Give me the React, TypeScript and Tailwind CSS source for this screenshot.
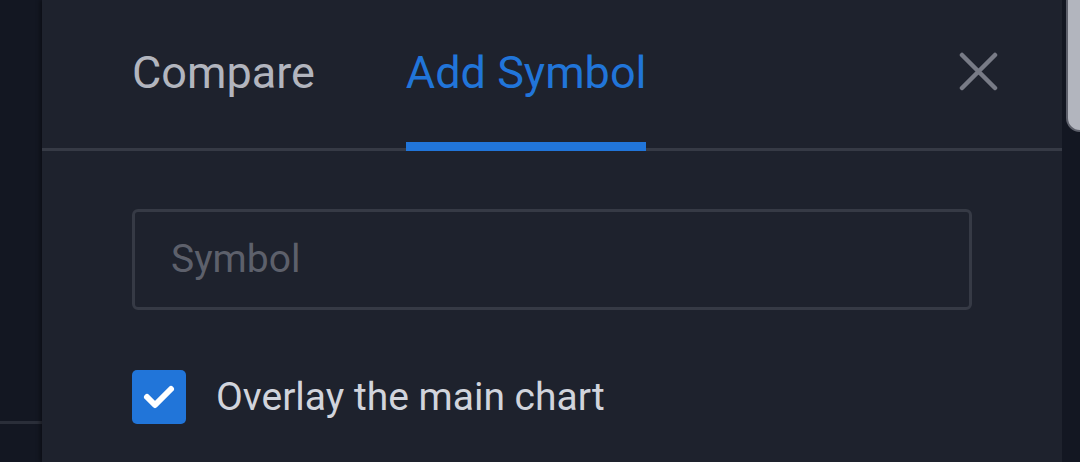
import React from "react";

const App: React.FC = () => {
  return (
    <div className="w-[1080px] h-[462px] overflow-hidden flex bg-[#131722] font-['Roboto',sans-serif]">
      <div className="w-[42px] shrink-0 flex flex-col">
        <div className="h-[421px] bg-[#131722]" />
        <div className="h-[3px] bg-[#2a2e39]" />
        <div className="flex-1 bg-[#131722]" />
      </div>

      <div className="w-[1020px] shrink-0 bg-[#1e222d] shadow-[-2px_0_4px_rgba(0,0,0,0.4)] flex flex-col">
        <div className="h-[151px] shrink-0 flex items-stretch border-b-[3px] border-[#363a45] pl-[90px] pr-[64px]">
          <button className="text-[45px] text-[#b2b5be] mr-[91px] pb-[4px] leading-none">
            Compare
          </button>
          <button className="relative text-[45px] text-[#2175d9] pb-[4px] leading-none">
            Add Symbol
            <span className="absolute left-0 right-0 bottom-[-3px] h-[9px] bg-[#2175d9]" />
          </button>
          <div className="flex-1" />
          <button className="self-center mb-[6px] text-[#787b86]">
            <svg width="39" height="39" viewBox="0 0 39 39">
              <path d="M3 3 L36 36 M36 3 L3 36" stroke="currentColor" strokeWidth="4.5" strokeLinecap="round" />
            </svg>
          </button>
        </div>

        <div className="pl-[90px] pr-[90px] pt-[58px]">
          <div className="h-[101px] rounded-[6px] border-[3px] border-[#363a45] flex items-center pl-[36px]">
            <span className="text-[39px] text-[#5d606b]">Symbol</span>
          </div>

          <label className="mt-[58px] flex items-center">
            <span className="w-[54px] h-[54px] shrink-0 rounded-[5px] bg-[#2175d9] flex items-center justify-center">
              <svg width="34" height="28" viewBox="0 0 34 28">
                <path d="M5 14 L13 22 L29 6" fill="none" stroke="white" strokeWidth="6" strokeLinecap="round" strokeLinejoin="round" />
              </svg>
            </span>
            <span className="ml-[30px] text-[39px] text-[#d1d4dc]">Overlay the main chart</span>
          </label>
        </div>
      </div>

      <div className="flex-1 relative bg-[#131722]">
        <div className="absolute left-[4px] top-[-20px] w-[40px] h-[152px] rounded-[14px] bg-[#b2b5be] border-2 border-[#5d606b]" />
      </div>
    </div>
  );
};

export default App;
